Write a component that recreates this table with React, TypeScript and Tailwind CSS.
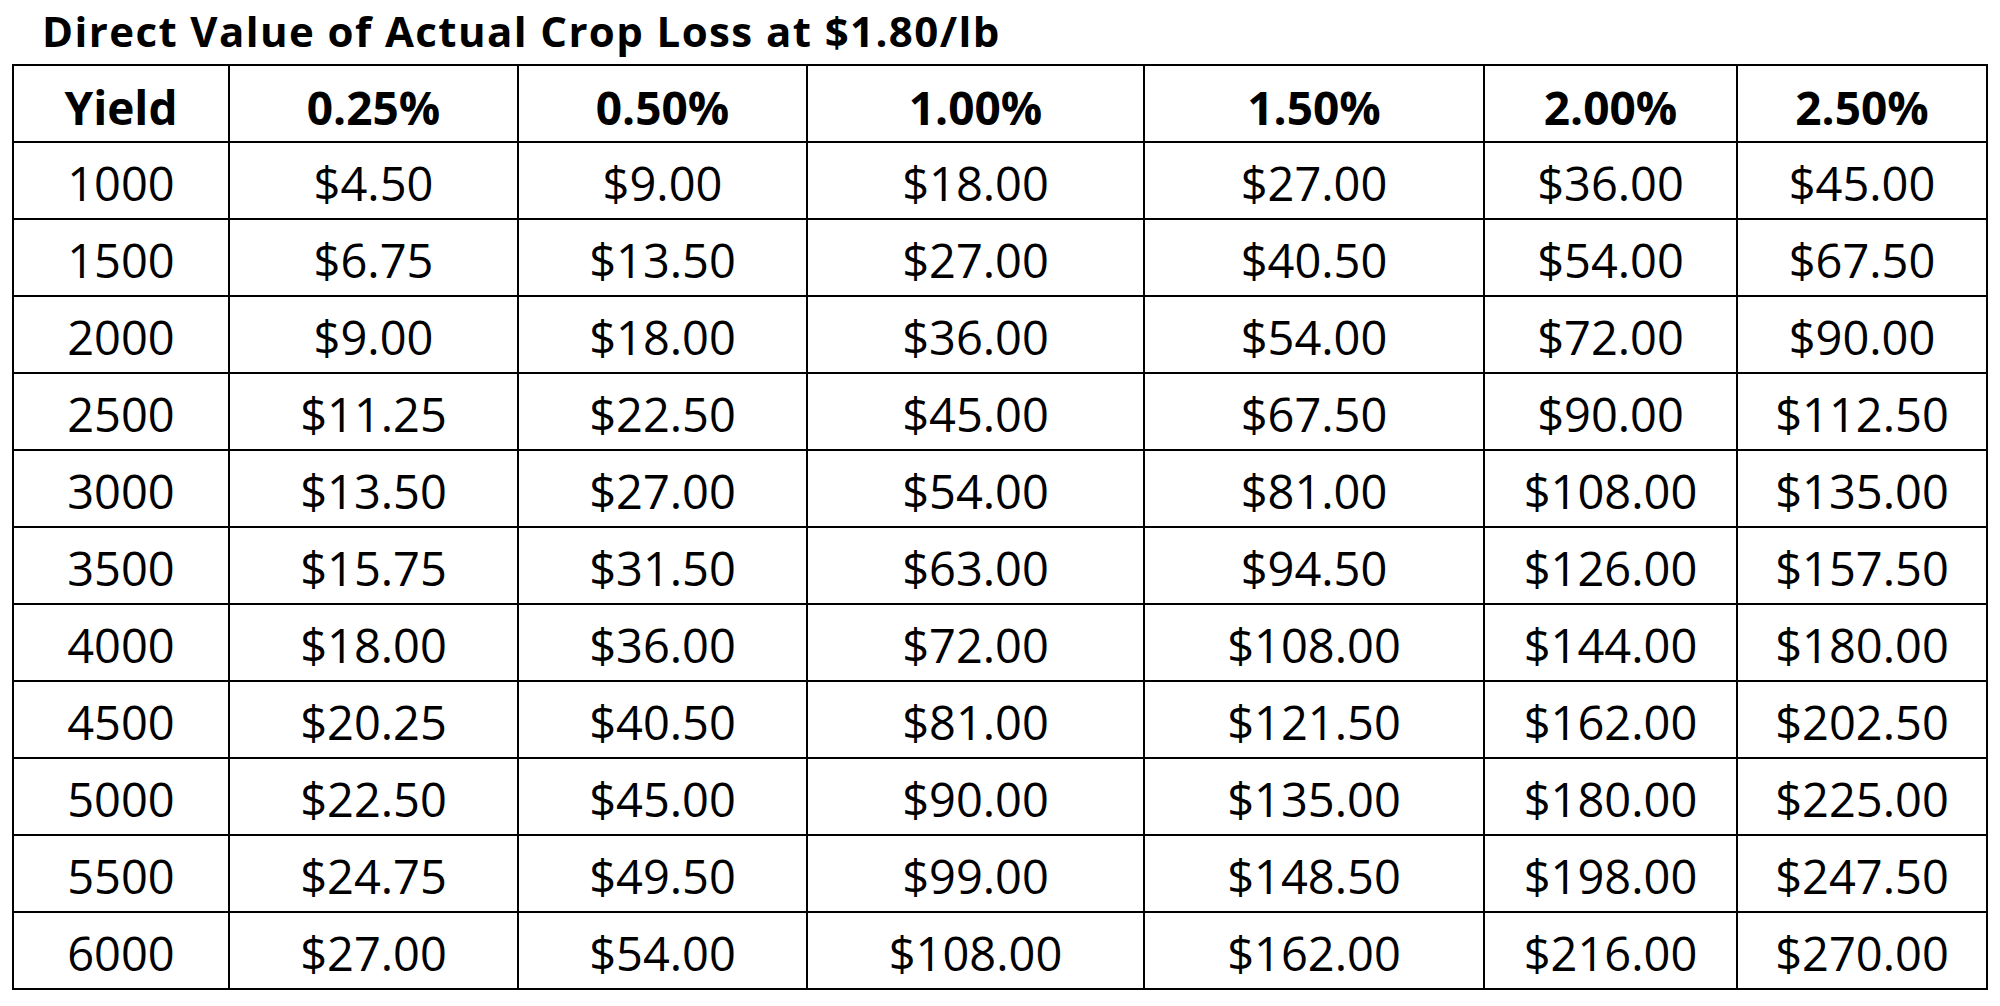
import React from "react";

const headers = ["Yield", "0.25%", "0.50%", "1.00%", "1.50%", "2.00%", "2.50%"];
const yields = [1000, 1500, 2000, 2500, 3000, 3500, 4000, 4500, 5000, 5500, 6000];
const pcts = [0.0025, 0.005, 0.01, 0.015, 0.02, 0.025];

const widths = ["w-[216px]", "w-[289px]", "w-[289px]", "w-[337px]", "w-[340px]", "w-[253px]", "w-[250px]"];

function Cell({ text, i, bold }: { text: string; i: number; bold?: boolean }) {
  return (
    <div
      className={`${widths[i]} h-[77px] shrink-0 border-r-2 border-b-2 border-black flex justify-center text-black ${
        bold ? "font-bold text-[46px] leading-[46px] pt-[18px]" : "font-normal text-[47px] leading-[47px] pt-[17px]"
      }`}
    >
      {text}
    </div>
  );
}

export default function App() {
  return (
    <div className="w-[2000px] h-[1006px] bg-white overflow-hidden" style={{ fontFamily: '"Open Sans", sans-serif' }}>
      <div className="h-[64px] pl-[42px] pt-[10px] text-[42px] leading-[42px] tracking-[1.4px] font-bold text-black whitespace-nowrap">
        Direct Value of Actual Crop Loss at $1.80/lb
      </div>
      <div className="ml-[12px] w-[1976px] border-l-2 border-t-2 border-black flex flex-col">
        <div className="flex">
          {headers.map((h, i) => (
            <Cell key={h} text={h} i={i} bold />
          ))}
        </div>
        {yields.map((y) => (
          <div key={y} className="flex">
            <Cell text={String(y)} i={0} />
            {pcts.map((p, j) => (
              <Cell key={j} text={"$" + (y * p * 1.8).toFixed(2)} i={j + 1} />
            ))}
          </div>
        ))}
      </div>
    </div>
  );
}
